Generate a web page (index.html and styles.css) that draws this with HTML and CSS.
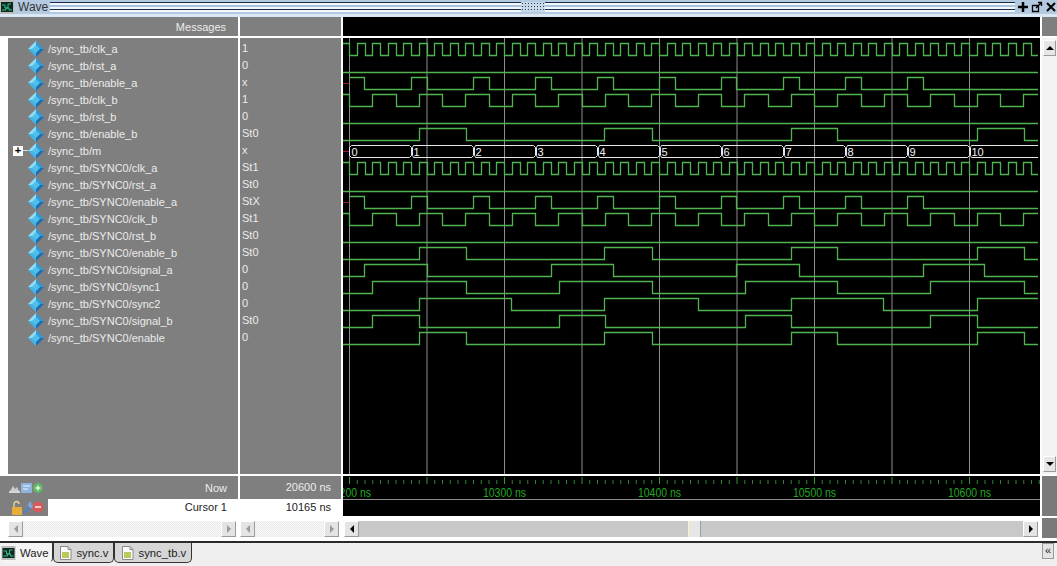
FILE: index.html
```html
<!DOCTYPE html>
<html>
	<head>
		<meta charset="UTF-8">
		<title>Wave</title>
		<link rel="stylesheet" href="styles.css">
	</head>
	<body>
		<svg class="defs" width="0" height="0">
			<symbol id="diamond" viewBox="0 0 16 16">
				<polygon points="8,0 16,8 8,8" fill="#2f9ad6"/>
				<polygon points="8,0 0,8 8,8" fill="#8fdcf5"/>
				<polygon points="0,8 8,16 8,8" fill="#45b4e4"/>
				<polygon points="16,8 8,16 8,8" fill="#1b6fb4"/>
				<polygon points="8,4 12,8 8,12 4,8" fill="#4fc0ea"/>
			</symbol>
			<symbol id="waveicon" viewBox="0 0 14 14">
				<rect x="0" y="0" width="14" height="14" fill="#bcbcbc"/>
				<rect x="1" y="2" width="12" height="10" fill="#0c2a22"/>
				<path d="M2 5h3v3h3V4h3M2 10h4V8h3v2h3" fill="none" stroke="#35c08a"/>
			</symbol>
			<symbol id="fileicon" viewBox="0 0 13 14">
				<path d="M1.500 .5H9L12 3.500V13.500H1.500Z" fill="#fafafa" stroke="#8a8a8a"/>
				<rect x="3" y="6" width="7" height="6" fill="#b9c95a"/>
				<path d="M9 .5V3.500H12" fill="none" stroke="#8a8a8a"/>
			</symbol>
		</svg>

		<div class="titlebar">
			<div class="title_row">
				<svg class="title_icon"><use href="#waveicon"/></svg>
				<span class="title_text">Wave</span>
				<div class="ridge"></div>
				<div class="grip"></div>
				<div class="ridge"></div>
				<div class="title_btns">
					<svg width="12" height="12" viewBox="0 0 12 12"><path d="M6 1v10M1 6h10" stroke="#000" stroke-width="2.500"/></svg>
					<svg width="12" height="12" viewBox="0 0 12 12"><path d="M1.500 4.500h6v6h-6zM5 7l5-5M7 1.500h3.500V5" fill="none" stroke="#000" stroke-width="1.300"/></svg>
					<svg width="12" height="12" viewBox="0 0 12 12"><path d="M2 2l8 8M10 2l-8 8" stroke="#000" stroke-width="2"/></svg>
				</div>
			</div>
		</div>

		<div class="panes">
			<div class="head head_name">Messages</div>
			<div class="head"></div>
			<div class="head_wave"></div>
			<div class="head"></div>

			<div class="names_wrap">
				<div class="names">
					<div class="row"><svg class="dia"><use href="#diamond"/></svg>/sync_tb/clk_a</div>
					<div class="row"><svg class="dia"><use href="#diamond"/></svg>/sync_tb/rst_a</div>
					<div class="row"><svg class="dia"><use href="#diamond"/></svg>/sync_tb/enable_a</div>
					<div class="row"><svg class="dia"><use href="#diamond"/></svg>/sync_tb/clk_b</div>
					<div class="row"><svg class="dia"><use href="#diamond"/></svg>/sync_tb/rst_b</div>
					<div class="row"><svg class="dia"><use href="#diamond"/></svg>/sync_tb/enable_b</div>
					<div class="row tree"><span class="expand">+</span><span class="branch"></span><svg class="dia"><use href="#diamond"/></svg>/sync_tb/m</div>
					<div class="row"><svg class="dia"><use href="#diamond"/></svg>/sync_tb/SYNC0/clk_a</div>
					<div class="row"><svg class="dia"><use href="#diamond"/></svg>/sync_tb/SYNC0/rst_a</div>
					<div class="row"><svg class="dia"><use href="#diamond"/></svg>/sync_tb/SYNC0/enable_a</div>
					<div class="row"><svg class="dia"><use href="#diamond"/></svg>/sync_tb/SYNC0/clk_b</div>
					<div class="row"><svg class="dia"><use href="#diamond"/></svg>/sync_tb/SYNC0/rst_b</div>
					<div class="row"><svg class="dia"><use href="#diamond"/></svg>/sync_tb/SYNC0/enable_b</div>
					<div class="row"><svg class="dia"><use href="#diamond"/></svg>/sync_tb/SYNC0/signal_a</div>
					<div class="row"><svg class="dia"><use href="#diamond"/></svg>/sync_tb/SYNC0/sync1</div>
					<div class="row"><svg class="dia"><use href="#diamond"/></svg>/sync_tb/SYNC0/sync2</div>
					<div class="row"><svg class="dia"><use href="#diamond"/></svg>/sync_tb/SYNC0/signal_b</div>
					<div class="row"><svg class="dia"><use href="#diamond"/></svg>/sync_tb/SYNC0/enable</div>
				</div>
			</div>

			<div class="values">
				<div class="val">1</div>
				<div class="val">0</div>
				<div class="val">x</div>
				<div class="val">1</div>
				<div class="val">0</div>
				<div class="val">St0</div>
				<div class="val">x</div>
				<div class="val">St1</div>
				<div class="val">St0</div>
				<div class="val">StX</div>
				<div class="val">St1</div>
				<div class="val">St0</div>
				<div class="val">St0</div>
				<div class="val">0</div>
				<div class="val">0</div>
				<div class="val">0</div>
				<div class="val">St0</div>
				<div class="val">0</div>
			</div>

			<svg class="wave" id="wave" viewBox="343 38 697 436"></svg>

			<div class="vscroll">
				<div class="vbtn"><span class="tri up"></span></div>
				<div class="vbtn"><span class="tri down"></span></div>
			</div>

			<div class="foot_name">
				<div class="now_row">
					<svg class="tools" width="36" height="14" viewBox="0 0 36 14">
						<path d="M2 10l3-5 2 3 2-2 2 4z" fill="#c4ccd4"/>
						<path d="M1 10h11v2H1z" fill="#d6d6d6"/>
						<rect x="13" y="2" width="11" height="10" rx="1" fill="#8fb4e0"/>
						<path d="M15 5h7M15 8h5" stroke="#eef4fb"/>
						<circle cx="30" cy="7" r="5" fill="#62b862"/>
						<path d="M30 4.500v5M27.500 7h5" stroke="#e6f6e6" stroke-width="1.500"/>
					</svg>
					<span>Now</span>
				</div>
				<div class="cursor_row">
					<div class="cursor_tools">
						<svg width="36" height="15" viewBox="0 0 36 15">
							<path d="M6 7V4a2.500 2.500 0 0 1 5 0" fill="none" stroke="#e8d7a0" stroke-width="1.300"/>
							<rect x="4" y="7" width="10" height="8" fill="#e6ac3c"/>
							<path d="M16 13l6-7" stroke="#4f82cc" stroke-width="2.200"/>
							<path d="M21 7a3 3 0 0 1 3-5l-1 2 1 1 2-1a3 3 0 0 1-5 3z" fill="#7fa6dc"/>
							<circle cx="30" cy="7" r="5.500" fill="#d65a5a"/>
							<path d="M27 7h6" stroke="#f6e6e6" stroke-width="1.600"/>
						</svg>
					</div>
					<div class="cursor_name">Cursor 1</div>
				</div>
			</div>

			<div class="foot_val">
				<div class="now_val">20600 ns</div>
				<div class="cursor_val">10165 ns</div>
			</div>

			<svg class="ruler" id="ruler" viewBox="343 476 697 40"></svg>
			<div class="foot_fill"></div>

			<div class="hcell hcell_name">
				<div class="hbar">
					<div class="hbtn"><span class="tri left pale"></span></div>
					<div class="htrack"></div>
					<div class="hbtn"><span class="tri right pale"></span></div>
				</div>
			</div>
			<div class="hcell hcell_val">
				<div class="hbar">
					<div class="hbtn"><span class="tri left pale"></span></div>
					<div class="htrack"></div>
					<div class="hbtn"><span class="tri right pale"></span></div>
				</div>
			</div>
			<div class="hcell hcell_wave">
				<div class="hbar gray">
					<div class="hbtn"><span class="tri left"></span></div>
					<div class="htrack solid"><div class="thumb"></div></div>
					<div class="hbtn"><span class="tri right"></span></div>
				</div>
			</div>
			<div class="foot_fill"></div>
		</div>

		<div class="tabbar">
			<div class="tab active"><svg class="tab_wave"><use href="#waveicon"/></svg>Wave</div>
			<div class="tab"><svg class="tab_file"><use href="#fileicon"/></svg>sync.v</div>
			<div class="tab tab_tb"><svg class="tab_file"><use href="#fileicon"/></svg>sync_tb.v</div>
			<div class="tab_space"></div>
			<div class="tab_arrow">«</div>
		</div>

		<script src="wave.js"></script>
	</body>
</html>
```

FILE: styles.css
```css
body {
    margin: 0;
    width: 1057px;
    height: 566px;
    overflow: hidden;
    background: #fff;
    font-family: "Liberation Sans", Arial, sans-serif;
    font-size: 11px;
}

.defs {
    display: block;
    height: 0;
}

/* title */
.titlebar {
    height: 17px;
    background: #dbe7f2;
}

.title_row {
    height: 14px;
    display: flex;
    align-items: center;
    background: #b4cae0;
}

.title_icon {
    width: 14px;
    height: 14px;
    flex: none;
}

.title_text {
    width: 36px;
    padding-left: 4px;
    box-sizing: border-box;
    font-size: 12px;
    color: #333;
}

.ridge {
    flex: 1;
    height: 12px;
    background: linear-gradient(#b4cae0 0 1px, #1a2c48 1px 2px, #f2f7fb 2px 4px, #a9c3dd 4px 6px, #f2f7fb 6px 8px, #1a2c48 8px 9px, #f2f7fb 9px 11px, #b4cae0 11px 12px);
}

.grip {
    width: 24px;
    height: 10px;
    flex: none;
    background: radial-gradient(circle, #29415f 0 .8px, #c7d8e8 1px) 0 0 / 3px 3px;
}

.title_btns {
    display: flex;
    gap: 2px;
    width: 42px;
    justify-content: flex-end;
    flex: none;
}

/* panes */
.panes {
    display: grid;
    grid-template-columns: 238px 101px 697px 15px;
    grid-template-rows: 19px 436px 40px 20px;
    gap: 2px;
    background: #fff;
    color: #ececec;
}

.head {
    background: #7f7f7f;
    line-height: 20px;
}

.head_name {
    text-align: right;
    padding-right: 12px;
}

.head_wave {
    background: #000;
}

.names_wrap {
    padding-left: 8px;
    background: #fff;
}

.names {
    height: 100%;
    padding-top: 2px;
    box-sizing: border-box;
    background: #7f7f7f;
}

.row {
    display: flex;
    align-items: center;
    height: 17px;
    padding-left: 20px;
    white-space: nowrap;
}

.row.tree {
    padding-left: 5px;
}

.dia {
    width: 16px;
    height: 16px;
    margin-right: 4px;
    flex: none;
}

.expand {
    width: 10px;
    height: 10px;
    flex: none;
    background: #fff;
    color: #000;
    font: bold 11px/9px "Liberation Sans", Arial, sans-serif;
    text-align: center;
}

.branch {
    width: 5px;
    height: 1px;
    flex: none;
    background: #ddd;
}

.values {
    padding-top: 2px;
    box-sizing: border-box;
    background: #7f7f7f;
}

.val {
    height: 17px;
    line-height: 17px;
    padding-left: 2px;
}

.wave,
.ruler {
    display: block;
    width: 697px;
    background: #000;
}

.wave {
    height: 436px;
}

.ruler {
    height: 40px;
}

.vscroll {
    display: flex;
    flex-direction: column;
    justify-content: space-between;
    padding: 2px 1px;
    background: #f3f3f3;
}

.vbtn {
    height: 16px;
    background: #e6e6e6;
    border: 1px solid #9a9a9a;
    border-top-color: #fff;
    border-left-color: #fff;
    box-sizing: border-box;
    display: flex;
    align-items: center;
    justify-content: center;
}

.tri {
    width: 0;
    height: 0;
    border: 4px solid transparent;
}

.tri.up {
    border-top: 0;
    border-bottom-color: #000;
}

.tri.down {
    border-bottom: 0;
    border-top-color: #000;
}

.tri.left {
    border-left: 0;
    border-right-color: #000;
}

.tri.right {
    border-right: 0;
    border-left-color: #000;
}

.tri.left.pale {
    border-right-color: #9a9a9a;
}

.tri.right.pale {
    border-left-color: #9a9a9a;
}

/* footer */
.foot_name,
.foot_val {
    display: flex;
    flex-direction: column;
}

.now_row {
    height: 23px;
    display: flex;
    align-items: center;
    justify-content: space-between;
    padding: 0 11px 0 8px;
    background: #7f7f7f;
}

.cursor_row {
    height: 17px;
    display: flex;
}

.cursor_tools {
    width: 40px;
    padding: 1px 0 0 8px;
    background: #7f7f7f;
}

.cursor_name {
    flex: 1;
    padding-right: 11px;
    background: #fff;
    color: #222;
    text-align: right;
    line-height: 17px;
}

.now_val {
    height: 23px;
    line-height: 23px;
    padding-right: 10px;
    background: #7f7f7f;
    text-align: right;
}

.cursor_val {
    height: 17px;
    line-height: 17px;
    padding-right: 10px;
    color: #222;
    text-align: right;
}

.foot_fill {
    background: #7a7a7a;
}

/* horizontal scrollbars */
.hcell {
    padding: 3px 0 1px;
    box-sizing: border-box;
    background: #fff;
}

.hcell_name {
    padding-left: 8px;
    padding-right: 2px;
}

.hcell_val {
    padding-right: 2px;
}

.hcell_wave {
    padding-left: 1px;
    padding-right: 2px;
}

.hbar {
    height: 100%;
    display: flex;
    background: repeating-conic-gradient(#e8e8e8 0 25%, #fbfbfb 0 50%) 0 0 / 2px 2px;
}

.hbtn {
    width: 15px;
    flex: none;
    background: #e4e4e4;
    border: 1px solid #9a9a9a;
    border-top-color: #fff;
    border-left-color: #fff;
    box-sizing: border-box;
    display: flex;
    align-items: center;
    justify-content: center;
}

.htrack {
    flex: 1;
    display: flex;
}

.htrack.solid {
    background: #c8c8c8;
    padding-left: 329px;
}

.thumb {
    width: 13px;
    background: #e6e6e6;
    border-left: 1px solid #fff3c0;
    border-right: 1px solid #a0a0a0;
    box-sizing: border-box;
}

/* tabs */
.tabbar {
    height: 28px;
    box-sizing: border-box;
    margin-top: 3px;
    display: flex;
    align-items: flex-start;
    border-top: 2px solid #2a2a2a;
    background: #efefef;
    color: #222;
    font-size: 11.3px;
}

.tab {
    height: 20px;
    display: flex;
    align-items: center;
    gap: 4px;
    padding: 0 5px;
    background: #d6d6d6;
    border: 1px solid #333;
    border-top: 0;
    border-radius: 0 0 5px 5px;
    box-sizing: border-box;
}

.tab.active {
    padding: 0 4px 0 0;
    background: #f4f4f4;
    border-color: transparent;
    border-right-color: #333;
}

.tab.tab_tb {
    padding-left: 6px;
}

.tab_wave {
    width: 15px;
    height: 14px;
    flex: none;
}

.tab_file {
    width: 13px;
    height: 14px;
    flex: none;
}

.tab_space {
    flex: 1;
}

.tab_arrow {
    width: 12px;
    height: 16px;
    margin-right: 3px;
    background: #e4e4e4;
    border: 1px solid #9a9a9a;
    box-sizing: border-box;
    font-size: 11px;
    line-height: 13px;
    text-align: center;
}
```

FILE: wave.js
```js
(function() {
	var NS = 'http://www.w3.org/2000/svg';
	var wave = document.getElementById('wave');
	var ruler = document.getElementById('ruler');
	var X0 = 349.5;  // 10200 ns
	var GRID = 77.5;  // 50 ns
	var RIGHT = 1038;

	var ena = [364.5, 411.5, 427, 473.5, 489, 535.5, 551, 597.5, 613, 659.5, 675, 721.5, 736.5, 783.5, 799, 845.5, 861, 907.5, 923];
	var enb = [419, 466, 604.5, 652, 791, 837.5, 977, 1024];

	// row, level at the left edge, x of every edge after that
	var rows = [
		[0, 1, clock(15.5)],
		[3, 1, clock(46.5)],
		[5, 0, enb],
		[7, 1, clock(15.5)],
		[10, 1, clock(46.5)],
		[12, 0, enb],
		[13, 0, [364.5, 427, 551, 613, 736.5, 799, 923, 984.5]],
		[14, 0, [372.5, 466, 559, 652, 745, 837.5, 930.5, 1024]],
		[15, 0, [419, 511.5, 604.5, 698, 791, 883.5, 977]],
		[16, 0, [372.5, 419, 559, 605, 745, 791, 930.5, 977]],
		[17, 0, enb]
	];

	for (var g = 0; g < 9; g++) {
		line(wave, X0 + g * GRID, 38, X0 + g * GRID, 474, '#8c8c8c');
	}

	rows.forEach(function(r) {
		polyline(r[0], r[1], r[2]);
	});
	[1, 4, 8, 11].forEach(function(r) {
		polyline(r, 0, []);
	});

	// enable_a starts unknown, so it gets a red stub
	[2, 9].forEach(function(r) {
		polyline(r, 1, ena, X0);
		line(wave, 343, 49.5 + 17 * r, X0, 49.5 + 17 * r, '#a02020');
	});
	line(wave, 343, 151.5, X0, 151.5, '#a02020');

	bus();

	for (var t = 0; t < 90; t++) {
		var x = X0 + t * GRID / 10;
		var major = t % 10 == 0;
		line(ruler, x, major ? 477 : 480, x, 484, major ? '#2f9a2f' : '#2a8a2a');
	}
	line(ruler, 343, 499.5, 1040, 499.5, '#8c8c8c');
	[10200, 10300, 10400, 10500, 10600].forEach(function(v, i) {
		var el = label(ruler, X0 + i * 155 - 21.500, 497, v + ' ns', '#22a822', 13);
		el.setAttribute('textLength', 43);
		el.setAttribute('lengthAdjust', 'spacingAndGlyphs');
	});

	function clock(step) {
		var half = step / 2;
		var out = [];
		for (var x = X0; x < RIGHT; x += half) {
			out.push(x);
		}
		return out;
	}

	function polyline(row, level, edges, start) {
		var hi = 43.5 + 17 * row;
		var lo = 55.5 + 17 * row;
		var x = start || 343;
		var y = level ? hi : lo;
		var pts = [x + ',' + y];
		edges.forEach(function(e) {
			var ex = Math.floor(e) + .5;
			level = level ? 0 : 1;
			pts.push(ex + ',' + y);
			y = level ? hi : lo;
			pts.push(ex + ',' + y);
		});
		pts.push(RIGHT + ',' + y);
		var el = document.createElementNS(NS, 'polyline');
		el.setAttribute('points', pts.join(' '));
		el.setAttribute('fill', 'none');
		el.setAttribute('stroke', '#4fb34f');
		el.setAttribute('stroke-width', 1.3);
		wave.appendChild(el);
	}

	function bus() {
		var top = 145.5;
		var bot = 157.5;
		var d = 'M' + (X0 + 2) + ' ' + top + 'L' + X0 + ' ' + (top + 2) + 'V' + (bot - 2) + 'L' + (X0 + 2) + ' ' + bot;
		for (var i = 1; i <= 10; i++) {
			var b = Math.floor(X0 + 62 * i) + .5;
			var prev = Math.floor(X0 + 62 * (i - 1)) + .5;
			d += 'M' + (prev + 2) + ' ' + top + 'H' + (b - 2) + 'L' + b + ' ' + (top + 2) + 'V' + (bot - 2) + 'L' + (b - 2) + ' ' + bot + 'H' + (prev + 2);
			d += 'M' + (b + 2) + ' ' + top + 'L' + (b + 1) + ' ' + (top + 2) + 'V' + (bot - 2) + 'L' + (b + 2) + ' ' + bot;
		}
		var last = Math.floor(X0 + 620) + .5;
		d += 'M' + (last + 2) + ' ' + top + 'H' + RIGHT + 'M' + (last + 2) + ' ' + bot + 'H' + RIGHT;
		var el = document.createElementNS(NS, 'path');
		el.setAttribute('d', d);
		el.setAttribute('fill', 'none');
		el.setAttribute('stroke', '#e8e8e8');
		wave.appendChild(el);
		for (var n = 0; n <= 10; n++) {
			label(wave, X0 + 62 * n + 2, 155.5, String(n), '#f2f2f2', 11);
		}
	}

	function line(svg, x1, y1, x2, y2, color) {
		var el = document.createElementNS(NS, 'line');
		el.setAttribute('x1', x1);
		el.setAttribute('y1', y1);
		el.setAttribute('x2', x2);
		el.setAttribute('y2', y2);
		el.setAttribute('stroke', color);
		svg.appendChild(el);
	}

	function label(svg, x, y, str, color, size) {
		var el = document.createElementNS(NS, 'text');
		el.setAttribute('x', x);
		el.setAttribute('y', y);
		el.setAttribute('fill', color);
		el.setAttribute('font-size', size);
		el.setAttribute('font-family', '"Liberation Sans", Arial, sans-serif');
		el.textContent = str;
		svg.appendChild(el);
		return el;
	}
})();
```
